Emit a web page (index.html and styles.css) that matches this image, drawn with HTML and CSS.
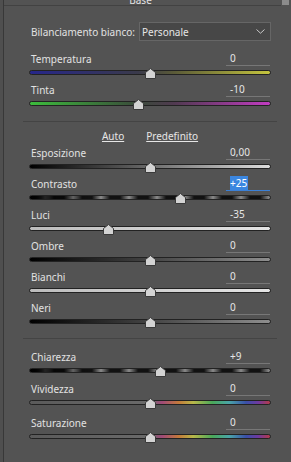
FILE: index.html
```html
<!DOCTYPE html>
<html lang="it">
<head>
    <meta charset="UTF-8">
    <meta name="viewport" content="width=device-width, initial-scale=1.0">
    <title>Base</title>
    <link rel="stylesheet" href="styles.css">
</head>
<body>
    <div class="panel">
        <div class="panel-main">
            <div class="panel-head"><span>Base</span></div>

            <!-- Bilanciamento bianco -->
            <div class="wb-row">
                <span class="wb-label">Bilanciamento bianco:</span>
                <div class="select">
                    <span>Personale</span>
                    <svg class="chevron" width="9" height="5" viewBox="0 0 9 5"><path d="M0.5 0.5 L4.5 4.2 L8.5 0.5" fill="none" stroke="#c8c8c8" stroke-width="1"/></svg>
                </div>
            </div>

            <div class="group group-wb">
                <div class="slider-row">
                    <div class="slider-top"><span class="label">Temperatura</span><span class="value">0</span></div>
                    <div class="track track-temp"><svg class="thumb" style="left:50%" width="11" height="11" viewBox="0 0 11 11"><polygon points="5.5,0.5 10.5,4.5 10.5,10.5 0.5,10.5 0.5,4.5" fill="#d3d3d3" stroke="#3a3a3a" stroke-width="1"/></svg></div>
                </div>
                <div class="slider-row">
                    <div class="slider-top"><span class="label">Tinta</span><span class="value">-10</span></div>
                    <div class="track track-tint"><svg class="thumb" style="left:45%" width="11" height="11" viewBox="0 0 11 11"><polygon points="5.5,0.5 10.5,4.5 10.5,10.5 0.5,10.5 0.5,4.5" fill="#d3d3d3" stroke="#3a3a3a" stroke-width="1"/></svg></div>
                </div>
            </div>

            <div class="sep"></div>

            <div class="links"><a href="#">Auto</a><a href="#">Predefinito</a></div>

            <div class="group">
                <div class="slider-row">
                    <div class="slider-top"><span class="label">Esposizione</span><span class="value">0,00</span></div>
                    <div class="track track-expo"><svg class="thumb" style="left:50%" width="11" height="11" viewBox="0 0 11 11"><polygon points="5.5,0.5 10.5,4.5 10.5,10.5 0.5,10.5 0.5,4.5" fill="#d3d3d3" stroke="#3a3a3a" stroke-width="1"/></svg></div>
                </div>
                <div class="slider-row">
                    <div class="slider-top"><span class="label">Contrasto</span><span class="value value-active"><span class="sel">+25</span></span></div>
                    <div class="track track-dash"><svg class="thumb" style="left:62.5%" width="11" height="11" viewBox="0 0 11 11"><polygon points="5.5,0.5 10.5,4.5 10.5,10.5 0.5,10.5 0.5,4.5" fill="#d3d3d3" stroke="#3a3a3a" stroke-width="1"/></svg></div>
                </div>
                <div class="slider-row">
                    <div class="slider-top"><span class="label">Luci</span><span class="value">-35</span></div>
                    <div class="track track-light"><svg class="thumb" style="left:32.5%" width="11" height="11" viewBox="0 0 11 11"><polygon points="5.5,0.5 10.5,4.5 10.5,10.5 0.5,10.5 0.5,4.5" fill="#d3d3d3" stroke="#3a3a3a" stroke-width="1"/></svg></div>
                </div>
                <div class="slider-row">
                    <div class="slider-top"><span class="label">Ombre</span><span class="value">0</span></div>
                    <div class="track track-dark"><svg class="thumb" style="left:50%" width="11" height="11" viewBox="0 0 11 11"><polygon points="5.5,0.5 10.5,4.5 10.5,10.5 0.5,10.5 0.5,4.5" fill="#d3d3d3" stroke="#3a3a3a" stroke-width="1"/></svg></div>
                </div>
                <div class="slider-row">
                    <div class="slider-top"><span class="label">Bianchi</span><span class="value">0</span></div>
                    <div class="track track-light"><svg class="thumb" style="left:50%" width="11" height="11" viewBox="0 0 11 11"><polygon points="5.5,0.5 10.5,4.5 10.5,10.5 0.5,10.5 0.5,4.5" fill="#d3d3d3" stroke="#3a3a3a" stroke-width="1"/></svg></div>
                </div>
                <div class="slider-row">
                    <div class="slider-top"><span class="label">Neri</span><span class="value">0</span></div>
                    <div class="track track-dark"><svg class="thumb" style="left:50%" width="11" height="11" viewBox="0 0 11 11"><polygon points="5.5,0.5 10.5,4.5 10.5,10.5 0.5,10.5 0.5,4.5" fill="#d3d3d3" stroke="#3a3a3a" stroke-width="1"/></svg></div>
                </div>
            </div>

            <div class="sep sep-2"></div>

            <div class="group group-color">
                <div class="slider-row">
                    <div class="slider-top"><span class="label">Chiarezza</span><span class="value">+9</span></div>
                    <div class="track track-dash"><svg class="thumb" style="left:54.5%" width="11" height="11" viewBox="0 0 11 11"><polygon points="5.5,0.5 10.5,4.5 10.5,10.5 0.5,10.5 0.5,4.5" fill="#d3d3d3" stroke="#3a3a3a" stroke-width="1"/></svg></div>
                </div>
                <div class="slider-row">
                    <div class="slider-top"><span class="label">Vividezza</span><span class="value">0</span></div>
                    <div class="track track-spectrum"><svg class="thumb" style="left:50%" width="11" height="11" viewBox="0 0 11 11"><polygon points="5.5,0.5 10.5,4.5 10.5,10.5 0.5,10.5 0.5,4.5" fill="#d3d3d3" stroke="#3a3a3a" stroke-width="1"/></svg></div>
                </div>
                <div class="slider-row slider-last">
                    <div class="slider-top"><span class="label">Saturazione</span><span class="value">0</span></div>
                    <div class="track track-spectrum"><svg class="thumb" style="left:50%" width="11" height="11" viewBox="0 0 11 11"><polygon points="5.5,0.5 10.5,4.5 10.5,10.5 0.5,10.5 0.5,4.5" fill="#d3d3d3" stroke="#3a3a3a" stroke-width="1"/></svg></div>
                </div>
            </div>
        </div>
        <div class="scrollbar"><div class="scroll-thumb"></div></div>
    </div>
</body>
</html>
```

FILE: styles.css
```css
/* Stili generali */
body {
    margin: 0;
    padding: 0;
    background-color: #4f4f4f;
    font-family: "Noto Sans", "Open Sans", sans-serif;
    font-size: 10px;
    color: #e2e2e2;
}

.panel {
    display: flex;
    margin-left: 3px;
    height: 462px;
    border-left: 1px solid #383838;
    background-color: #535353;
    overflow: hidden;
}

.panel-main {
    width: 278px;
}

/* Intestazione tagliata in alto */
.panel-head {
    height: 5px;
    display: flex;
    justify-content: center;
    align-items: flex-end;
    overflow: hidden;
    border-bottom: 1px solid #424242;
}

.panel-head span {
    line-height: 13px;
    margin-bottom: -2px;
    margin-right: 4px;
}

/* Riga del bilanciamento del bianco */
.wb-row {
    display: flex;
    align-items: center;
    margin: 16px 10px 0 27px;
    height: 19px;
    white-space: nowrap;
}

.select {
    margin-left: auto;
    width: 128px;
    height: 17px;
    display: flex;
    align-items: center;
    justify-content: space-between;
    padding: 0 0 0 2px;
    background-color: #474747;
    border: 1px solid #666;
    box-sizing: content-box;
    color: #e6e6e6;
}

.chevron {
    margin-right: 5px;
}

/* Gruppi di cursori */
.group {
    margin: 0 10px 0 25px;
}

.group-wb {
    margin-top: 10px;
}

.slider-row {
    height: 31px;
}

.slider-top {
    display: flex;
    justify-content: space-between;
    height: 16px;
    white-space: nowrap;
}

.label {
    padding-left: 2px;
    line-height: 16px;
}

.value {
    width: 40px;
    padding-left: 4px;
    margin-right: 1px;
    margin-top: 1px;
    line-height: 13px;
    height: 13px;
    border-bottom: 1px solid #777;
    color: #e6e6e6;
}

.value-active {
    border-bottom-color: #3b80d6;
}

.value-active .sel {
    background-color: #3b86df;
    color: #fff;
    padding: 0 1px 0 0;
}

/* Binari */
.track {
    position: relative;
    margin-top: 3px;
    height: 3px;
    border: 1px solid #222;
    border-radius: 3px;
}

.thumb {
    position: absolute;
    top: -3px;
    margin-left: -5.5px;
}

.track-temp {
    background: linear-gradient(to right, #26268a, #3a3a4a 45%, #5a5a38 60%, #c4c43e);
}

.track-tint {
    background: linear-gradient(to right, #3cbc3c, #3a4a3a 45%, #503a50 60%, #c23cc2);
}

.track-expo {
    background: linear-gradient(to right, #000, #555 40%, #ddd);
}

.track-dash {
    background:
        linear-gradient(to right, #000 0%, rgba(0, 0, 0, 0) 25%),
        repeating-linear-gradient(to right, #111 0, #111 6px, #8a8a8a 15px, #111 24px, #111 28px);
}

.track-light {
    background: linear-gradient(to right, #bcbcbc, #e4e4e4);
}

.track-dark {
    background: linear-gradient(to right, #000, #444 50%, #8e8e8e);
}

.track-spectrum {
    background: linear-gradient(to right, #5a5a5a, #6a6a6a 50%, #a04a78 55%, #c47a3a 62%, #b8b84a 68%, #4aa85a 76%, #4aa4a8 83%, #3a50a8 90%, #6e3aa0 95%, #b43a48);
}

/* Separatori */
.sep {
    height: 1px;
    margin: 8px 4px 0 19px;
    background-color: #444;
}

.sep-2 {
    margin-top: 7px;
}

.links {
    display: flex;
    justify-content: center;
    gap: 22px;
    margin: 6px 10px 1px 25px;
    line-height: 16px;
}

.links a {
    color: #e6e6e6;
    text-decoration: underline;
}

.group-color {
    margin-top: 10px;
}

.group-color .slider-row {
    height: 32px;
}

.group-color .slider-last {
    margin-top: 2px;
}

/* Barra di scorrimento */
.scrollbar {
    width: 9px;
    padding-left: 1px;
}

.scroll-thumb {
    width: 7px;
    height: 5px;
    background-color: #8c8c8c;
}
```
